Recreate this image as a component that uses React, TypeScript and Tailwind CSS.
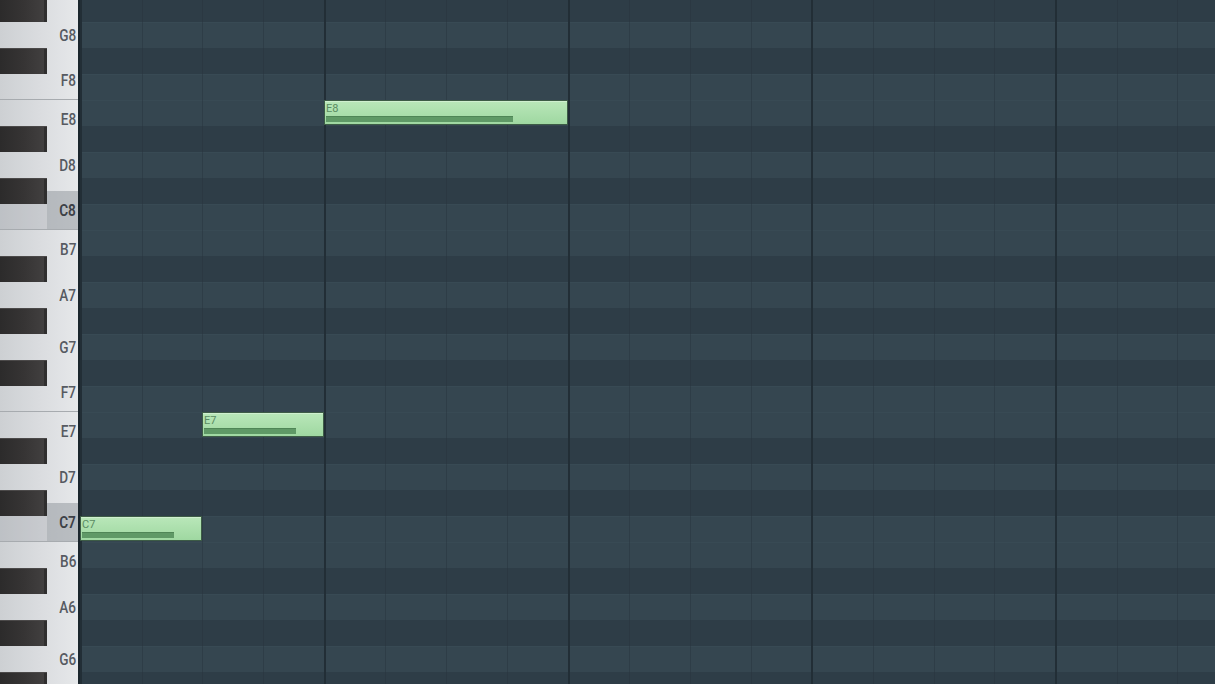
import React from 'react';
import clsx from 'clsx';

const NAMES = ['C', 'C#', 'D', 'D#', 'E', 'F', 'F#', 'G', 'G#', 'A', 'A#', 'B'];
const BLACK = [1, 3, 6, 8, 10];

// top visible row is G#8, bottom is F#6
const TOP = 104;
const ROWS = Array.from({ length: 27 }, (_, i) => TOP - i);

// white keys, heights follow real keyboard proportions (26px per semitone)
const KEY_H: Record<number, string> = {
  0: 'h-[39px]',
  2: 'h-[52px]',
  4: 'h-[39px]',
  5: 'h-[39px]',
  7: 'h-[52px]',
  9: 'h-[52px]',
  11: 'h-[39px]',
};
const WHITES = ROWS.concat([77]).filter((m) => !BLACK.includes(m % 12));
WHITES.unshift(105); // A8, mostly scrolled out of view

// keys whose label sits outside the visible area
const HIDDEN = [105, 77];

const NOTES = [
  { midi: 84, left: 0, width: 122 },
  { midi: 88, left: 122, width: 122 },
  { midi: 100, left: 244, width: 244 },
];

const noteName = (m: number) => NAMES[m % 12] + Math.floor(m / 12);

const Keyboard: React.FC = () => (
  <div className="flex h-full w-[80px] shrink-0 overflow-hidden border-r-2 border-[#1b262d] bg-linear-to-r from-[#cdd0d3] via-[#dadcdf] to-[#e6e8ea]">
    <div className="-mt-[4px] flex w-[47px] shrink-0 flex-col">
      {ROWS.map((m) =>
        BLACK.includes(m % 12) ? (
          <div
            className="h-[26px] shrink-0 border-t border-[#4b4949] bg-linear-to-r from-[#2c2b2b] via-[#363434] to-[#434141] shadow-[inset_-3px_0_0_#2f2e2e]"
            key={m}
          />
        ) : (
          <div
            className={clsx(
              'h-[26px] shrink-0',
              m % 12 === 0 && 'bg-[#8e949a]/25',
              (m % 12 === 0 || m % 12 === 5) && 'border-b border-[#a7abaf]',
            )}
            key={m}
          />
        ),
      )}
    </div>
    <div className="-mt-[43px] flex w-[31px] shrink-0 flex-col">
      {WHITES.map((m) => (
        <div
          className={clsx(
            'flex shrink-0 items-center justify-end pr-[2px]',
            KEY_H[m % 12],
            m % 12 === 0 && 'bg-[#8e949a]/50',
            (m % 12 === 0 || m % 12 === 5) && 'border-b border-[#a7abaf]',
          )}
          key={m}
        >
          {HIDDEN.includes(m) ? null : (
            <span
              className={clsx(
                'inline-block origin-right scale-x-[0.8] text-[17px] leading-none',
                m % 12 === 0
                  ? 'font-semibold text-[#3c4046]'
                  : 'font-medium text-[#565a61]',
              )}
            >
              {noteName(m)}
            </span>
          )}
        </div>
      ))}
    </div>
  </div>
);

const Note: React.FC<{ midi: number; left: number; width: number }> = ({
  midi,
  left,
  width,
}) => (
  <div
    className="absolute top-0 z-10 flex h-[25px] flex-col border border-[#3d5c46] bg-linear-to-b from-[#b9e7b9] to-[#9fd8a1] shadow-[inset_0_1px_0_#cfefcf]"
    style={{ left, width }}
  >
    <span className="pl-[1px] pt-[2px] text-[11px] leading-[11px] text-[#5a8b62]">
      {noteName(midi)}
    </span>
    <div
      className="ml-[1px] mt-[2px] h-[6px] bg-[#5f9966] shadow-[inset_0_1px_0_#4f8656]"
      style={{ width: Math.round((width - 4) * 0.78) }}
    />
  </div>
);

const Grid: React.FC = () => (
  <div className="relative h-full flex-1 overflow-hidden">
    <div className="-mt-[4px] flex flex-col">
      {ROWS.map((m) => (
        <div
          className={clsx(
            'relative h-[26px] shrink-0',
            BLACK.includes(m % 12)
              ? 'bg-[#2e3d47]'
              : 'bg-[#354650] shadow-[inset_0_1px_0_#384a54]',
          )}
          key={m}
        >
          {NOTES.filter((n) => n.midi === m).map((n) => (
            <Note key={n.midi} {...n} />
          ))}
        </div>
      ))}
    </div>
    <div className="pointer-events-none absolute inset-0 flex">
      {[0, 1, 2, 3, 4].map((b) => (
        <div
          className="flex w-[243.75px] shrink-0 border-l-2 border-[#222e36]"
          key={b}
        >
          <div className="flex-1" />
          <div className="flex-1 border-l border-[#27343d]/50" />
          <div className="flex-1 border-l border-[#27343d]/50" />
          <div className="flex-1 border-l border-[#27343d]/50" />
        </div>
      ))}
    </div>
  </div>
);

const App: React.FC = () => (
  <div className="flex h-[684px] w-[1215px] overflow-hidden bg-[#2f3e48] font-['Roboto','Liberation_Sans',sans-serif]">
    <Keyboard />
    <Grid />
  </div>
);

export default App;
